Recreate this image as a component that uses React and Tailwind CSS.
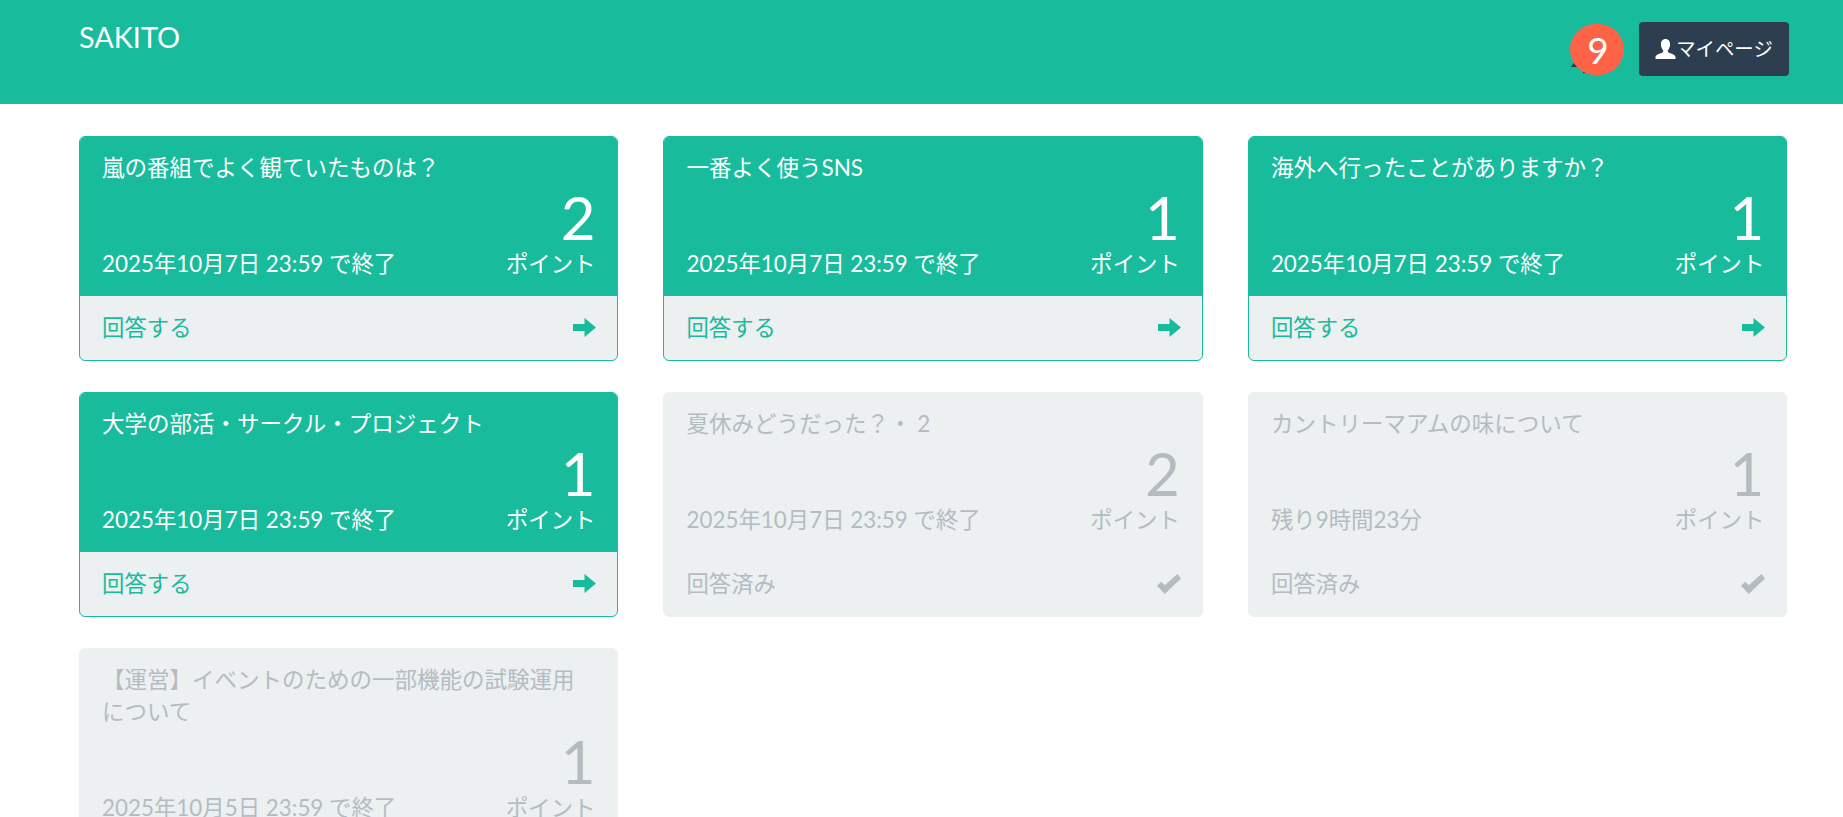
import React from 'react';

const FONT = "font-['Lato','Noto_Sans_CJK_JP',sans-serif]";

const cards = [
  { title: '嵐の番組でよく観ていたものは？', points: 2, date: '2025年10月7日 23:59 で終了', done: false },
  { title: '一番よく使うSNS', points: 1, date: '2025年10月7日 23:59 で終了', done: false },
  { title: '海外へ行ったことがありますか？', points: 1, date: '2025年10月7日 23:59 で終了', done: false },
  { title: '大学の部活・サークル・プロジェクト', points: 1, date: '2025年10月7日 23:59 で終了', done: false },
  { title: '夏休みどうだった？・ 2', points: 2, date: '2025年10月7日 23:59 で終了', done: true },
  { title: 'カントリーマアムの味について', points: 1, date: '残り9時間23分', done: true },
  { title: '【運営】イベントのための一部機能の試験運用について', points: 1, date: '2025年10月5日 23:59 で終了', done: true },
];

const ArrowIcon = () => (
  <svg viewBox="0 0 23 19" className="w-[23px] h-[19px] fill-[#18bc9c]">
    <path d="M0 6h11.500V0L23 9.500 11.500 19v-6H0z" />
  </svg>
);

const CheckIcon = () => (
  <svg viewBox="0 0 24 20" className="w-[24px] h-[20px] fill-[#b4bcc2]">
    <path d="M0 11.700l4.300-4 3.400 3.600L20.500 0 24 4.500 7.700 20z" />
  </svg>
);

const UserIcon = () => (
  <svg viewBox="0 0 22 22" className="w-[21px] h-[20px] fill-white">
    <path d="M11 0c3.400 0 5 2.600 5 6 0 2.800-1.200 5-2.400 6.200v1.500c0 1 3 2 5.400 3.200 1.700.8 3 1.700 3 3.100v2H0v-2c0-1.400 1.300-2.300 3-3.100 2.400-1.200 5.400-2.200 5.400-3.200v-1.500C7.200 11 6 8.800 6 6c0-3.400 1.600-6 5-6z" />
  </svg>
);

const Card = ({ card }) => {
  const { title, points, date, done } = card;
  return (
    <div className={`rounded-[6px] overflow-hidden border ${done ? 'border-[#ecf0f1] bg-[#ecf0f1] text-[#b4bcc2]' : 'border-[#18bc9c] bg-[#ecf0f1]'}`}>
      <div className={`px-[22px] pt-[15px] pb-[16px] flex flex-col ${done ? '' : 'bg-[#18bc9c] text-white'}`}>
        <div className="text-[22.5px] leading-[32px]">{title}</div>
        <div className="mt-[2px] text-right text-[60px] leading-[62px]">{points}</div>
        <div className="flex justify-between items-end text-[22.4px] leading-[32px]">
          <span>{date}</span>
          <span>ポイント</span>
        </div>
      </div>
      <div className={`h-[63.5px] pl-[22px] pr-[21px] flex items-center justify-between text-[22.4px] ${done ? '' : 'text-[#18bc9c]'}`}>
        <span>{done ? '回答済み' : '回答する'}</span>
        {done ? <CheckIcon /> : <ArrowIcon />}
      </div>
    </div>
  );
};

const App = () => {
  return (
    <div className={`${FONT} bg-white`}>
      <nav className="h-[104px] bg-[#18bc9c] text-white pl-[79px] pr-[54px] flex justify-between items-start">
        <div className="text-[28.8px] leading-[38px] mt-[18px]">SAKITO</div>
        <div className="flex items-center gap-[15px] mt-[22px]">
          {/* dark bell is mostly hidden behind the count badge */}
          <div className="relative w-[54px] h-[51px]">
            <div className="absolute left-[1px] bottom-[8px] w-0 h-0 border-x-[4px] border-x-transparent border-b-[6px] border-b-[#2c3e50]" />
            <div className="absolute left-[13px] bottom-[2px] w-[3px] h-[2px] bg-[#2c3e50]" />
            <div className="absolute inset-0 rounded-full bg-[#ff6347] pl-[2px] flex items-center justify-center text-[37px] leading-none">9</div>
          </div>
          <button className="h-[54px] w-[150px] rounded-[4px] bg-[#2c3e50] text-white text-[19.4px] flex items-center justify-center">
            <UserIcon />
            <span>マイページ</span>
          </button>
        </div>
      </nav>
      <main className="grid grid-cols-3 gap-x-[45px] gap-y-[31.5px] pl-[79px] pr-[55.7px] pt-[32px] pb-[32px]">
        {cards.map((card) => (
          <Card key={card.title} card={card} />
        ))}
      </main>
    </div>
  );
};

export default App;
